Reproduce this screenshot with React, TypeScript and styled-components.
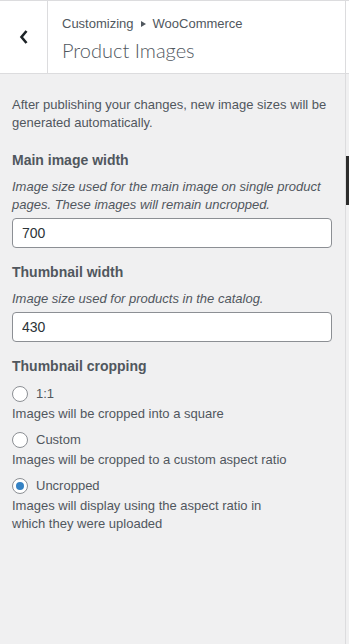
import React, { useState } from "react";
import styled, { createGlobalStyle } from "styled-components";

const GlobalStyle = createGlobalStyle`
  html, body {
    margin: 0;
    padding: 0;
    background: #f0f0f1;
  }
  body {
    font-family: "Liberation Sans", Arial, sans-serif;
    color: #50575e;
    -webkit-font-smoothing: antialiased;
  }
  * { box-sizing: border-box; }
`;

const Screen = styled.div`
  display: flex;
  width: 349px;
  min-height: 644px;
`;

const Panel = styled.div`
  width: 346px;
  flex-shrink: 0;
  border-right: 1px solid #dcdcde;
  display: flex;
  flex-direction: column;
`;

const Gutter = styled.div`
  flex: 1;
  display: flex;
  flex-direction: column;
`;

const GutterHead = styled.div`
  height: 74px;
  background: #fff;
  border-top: 1px solid #dcdcde;
  border-bottom: 1px solid #dcdcde;
`;

const ScrollThumb = styled.div`
  margin-top: 82px;
  height: 49px;
  background: #2c2c2c;
`;

const Header = styled.header`
  display: flex;
  height: 74px;
  background: #fff;
  border-top: 1px solid #dcdcde;
  border-bottom: 1px solid #dcdcde;
`;

const BackButton = styled.button`
  width: 48px;
  flex-shrink: 0;
  border: 0;
  border-right: 1px solid #dcdcde;
  background: transparent;
  display: flex;
  align-items: center;
  justify-content: center;
  padding: 0;
  cursor: pointer;
  color: #1d2327;
`;

const TitleBlock = styled.div`
  padding: 14px 0 0 14px;
  display: flex;
  flex-direction: column;
`;

const Crumbs = styled.div`
  display: flex;
  align-items: center;
  gap: 7px;
  font-size: 13px;
  line-height: 18px;
  color: #50575e;
`;

const CrumbArrow = styled.span`
  width: 0;
  height: 0;
  border-left: 5px solid #50575e;
  border-top: 3px solid transparent;
  border-bottom: 3px solid transparent;
`;

const Title = styled.h3`
  margin: 3px 0 0;
  font-family: Lato, "Liberation Sans", sans-serif;
  font-size: 20px;
  line-height: 28px;
  font-weight: 300;
  color: #50575e;
`;

const Body = styled.div`
  padding: 22px 12px 40px;
  display: flex;
  flex-direction: column;
`;

const Intro = styled.p`
  margin: 0 0 18px;
  font-size: 13px;
  line-height: 18px;
`;

const Control = styled.div`
  display: flex;
  flex-direction: column;
  margin-bottom: 14px;
`;

const Label = styled.span`
  font-size: 14px;
  line-height: 20px;
  font-weight: 700;
  color: #50575e;
`;

const Hint = styled.span`
  margin-top: 8px;
  font-size: 13px;
  line-height: 18px;
  font-style: italic;
`;

const NumberInput = styled.input`
  margin-top: 4px;
  width: 320px;
  height: 30px;
  padding: 0 9px;
  border: 1px solid #8c8f94;
  border-radius: 4px;
  background: #fff;
  font-family: "Liberation Sans", Arial, sans-serif;
  font-size: 14px;
  color: #2c3338;
  outline: none;
`;

const Options = styled.div`
  margin-top: 8px;
  display: flex;
  flex-direction: column;
  gap: 7px;
`;

const Option = styled.label`
  display: flex;
  flex-direction: column;
  cursor: pointer;
`;

const OptionRow = styled.span`
  display: flex;
  align-items: center;
  gap: 8px;
  font-size: 13px;
  line-height: 20px;
`;

const Radio = styled.span<{ $checked: boolean }>`
  width: 16px;
  height: 16px;
  border-radius: 50%;
  border: 1px solid #8c8f94;
  background: #fff;
  display: flex;
  align-items: center;
  justify-content: center;

  &::after {
    content: "";
    width: 8px;
    height: 8px;
    border-radius: 50%;
    background: #3582c4;
    display: ${(p) => (p.$checked ? "block" : "none")};
  }
`;

const OptionNote = styled.span`
  margin-top: 1px;
  font-size: 13px;
  line-height: 18px;
`;

const cropOptions = [
  { value: "1:1", label: "1:1", note: "Images will be cropped into a square" },
  { value: "custom", label: "Custom", note: "Images will be cropped to a custom aspect ratio" },
  {
    value: "uncropped",
    label: "Uncropped",
    note: (
      <>
        Images will display using the aspect ratio in
        <br />
        which they were uploaded
      </>
    ),
  },
];

const App: React.FC = () => {
  const [mainWidth, setMainWidth] = useState("700");
  const [thumbWidth, setThumbWidth] = useState("430");
  const [cropping, setCropping] = useState("uncropped");

  return (
    <>
      <GlobalStyle />
      <Screen>
        <Panel>
          <Header>
            <BackButton aria-label="Back">
              <svg width="10" height="16" viewBox="0 0 10 16">
                <polyline
                  points="7.5,2 2.5,8 7.5,14"
                  fill="none"
                  stroke="currentColor"
                  strokeWidth="2.6"
                />
              </svg>
            </BackButton>
            <TitleBlock>
              <Crumbs>
                <span>Customizing</span>
                <CrumbArrow />
                <span>WooCommerce</span>
              </Crumbs>
              <Title>Product Images</Title>
            </TitleBlock>
          </Header>

          <Body>
            <Intro>
              After publishing your changes, new image sizes will be generated
              automatically.
            </Intro>

            <Control>
              <Label>Main image width</Label>
              <Hint>
                Image size used for the main image on single product pages.
                These images will remain uncropped.
              </Hint>
              <NumberInput
                value={mainWidth}
                onChange={(e) => setMainWidth(e.target.value)}
              />
            </Control>

            <Control>
              <Label>Thumbnail width</Label>
              <Hint>Image size used for products in the catalog.</Hint>
              <NumberInput
                value={thumbWidth}
                onChange={(e) => setThumbWidth(e.target.value)}
              />
            </Control>

            <Control>
              <Label>Thumbnail cropping</Label>
              <Options>
                {cropOptions.map((opt) => (
                  <Option key={opt.value} onClick={() => setCropping(opt.value)}>
                    <OptionRow>
                      <Radio $checked={cropping === opt.value} />
                      {opt.label}
                    </OptionRow>
                    <OptionNote>{opt.note}</OptionNote>
                  </Option>
                ))}
              </Options>
            </Control>
          </Body>
        </Panel>
        <Gutter>
          <GutterHead />
          <ScrollThumb />
        </Gutter>
      </Screen>
    </>
  );
};

export default App;
